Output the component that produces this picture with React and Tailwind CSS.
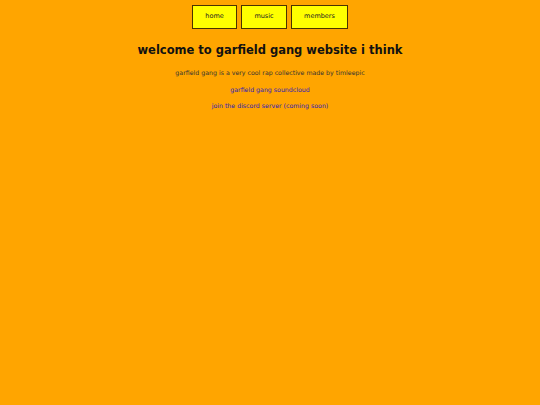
import React from 'react'

const font = { fontFamily: '"Comic Sans MS", "DejaVu Sans", sans-serif' }

const navItems = [
    { label: 'home', w: 'w-[45px]' },
    { label: 'music', w: 'w-[46px]' },
    { label: 'members', w: 'w-[57px]' },
]

const App = () => {
    return (
        <div className="min-h-[405px] w-full bg-[#ffa500] text-center text-[#222]" style={font}>
            {/* Nav */}
            <nav className="flex justify-center gap-[4px] pt-[5px]">
                {navItems.map((item) => (
                    <a
                        key={item.label}
                        href="#"
                        className={`${item.w} h-[24px] flex items-center justify-center bg-[#ffff00] border border-[#4a3300] text-[6.5px] text-[#222]`}
                    >
                        {item.label}
                    </a>
                ))}
            </nav>

            <h1 className="mt-[11px] text-[11.5px] font-bold text-[#111] leading-[20px]">
                welcome to garfield gang website i think
            </h1>

            <p className="mt-[8px] text-[6.25px] text-[#333] leading-[10px]">
                garfield gang is a very cool rap collective made by timleepic
            </p>
            <p className="mt-[7px] text-[6.25px] leading-[10px]">
                <a href="#" className="text-[#2c1ab8]">garfield gang soundcloud</a>
            </p>
            <p className="mt-[6px] text-[6.25px] leading-[10px]">
                <a href="#" className="text-[#2c1ab8]">join the discord server (coming soon)</a>
            </p>
        </div>
    )
}

export default App
